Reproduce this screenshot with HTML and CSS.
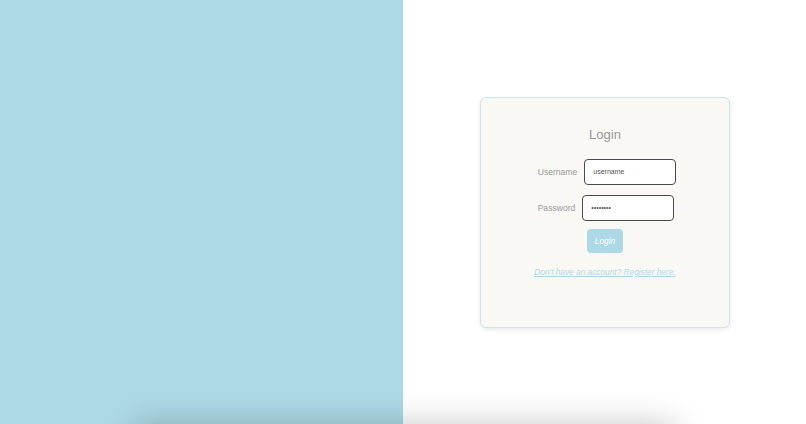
FILE: index.html
```html
<!DOCTYPE html>
<html lang="en">
<head>
<meta charset="utf-8">
<title>Login</title>
<link rel="stylesheet" href="styles.css">
</head>
<body>
<div class="split">
  <div class="side"></div>
  <div class="main">
    <div class="card">
      <h1 class="title">Login</h1>
      <form class="form">
        <div class="row">
          <label class="label" for="u">Username</label>
          <input class="input" id="u" type="text" value="username">
        </div>
        <div class="row">
          <label class="label" for="p">Password</label>
          <input class="input" id="p" type="password" value="password">
        </div>
        <button class="btn" type="button">Login</button>
        <a class="link" href="#">Don't have an account? Register here.</a>
      </form>
    </div>
  </div>
</div>
<div class="below"></div>
</body>
</html>
```
FILE: styles.css
```css
html, body {
  margin: 0;
  padding: 0;
  font-family: "Liberation Sans", Arial, sans-serif;
}
html {
  overflow: hidden;
}
.split {
  display: flex;
  height: 424px;
}
.side {
  width: 403px;
  background: #add8e6;
}
.main {
  flex: 1;
  background: #fff;
  display: flex;
  align-items: center;
  justify-content: center;
}
.card {
  box-sizing: border-box;
  width: 250px;
  height: 231px;
  margin-left: 1px;
  background: #f9f8f5;
  border: 1px solid #cfe3ea;
  border-radius: 6px;
  box-shadow: 0 2px 4px rgba(0, 0, 0, 0.08);
  padding-top: 29px;
  display: flex;
  flex-direction: column;
  align-items: center;
}
.title {
  margin: 0;
  font-size: 13px;
  font-weight: normal;
  color: #9a9a9a;
  line-height: 16px;
}
.form {
  margin-top: 16px;
  display: flex;
  flex-direction: column;
  align-items: center;
  padding-left: 4px;
}
.row {
  display: flex;
  align-items: center;
  gap: 7px;
  margin-bottom: 10px;
}
.row + .row {
  margin-left: -2px;
  margin-bottom: 8px;
}
.label {
  font-size: 8.6px;
  color: #9a9a9a;
}
.input {
  box-sizing: border-box;
  width: 92px;
  height: 26px;
  border: 1.5px solid #4a4a4a;
  border-radius: 4px;
  background: #fff;
  padding: 0 8px;
  font-family: "Liberation Sans", Arial, sans-serif;
  font-size: 7px;
  color: #555;
  outline: none;
}
.btn {
  box-sizing: border-box;
  width: 36px;
  height: 24px;
  border: none;
  border-radius: 4px;
  background: #add8e6;
  color: #fff;
  font-family: "Liberation Sans", Arial, sans-serif;
  font-style: italic;
  font-size: 8.3px;
  margin-left: -4px;
  padding: 0;
}
.link {
  margin-top: 14px;
  margin-left: -4px;
  font-size: 8.3px;
  font-style: italic;
  color: #add8e6;
  text-decoration: underline;
}
.below {
  position: relative;
  width: 540px;
  height: 200px;
  margin-left: 135px;
  background: #fff;
  box-shadow: 0 0 30px rgba(0, 0, 0, 0.22);
}
```
